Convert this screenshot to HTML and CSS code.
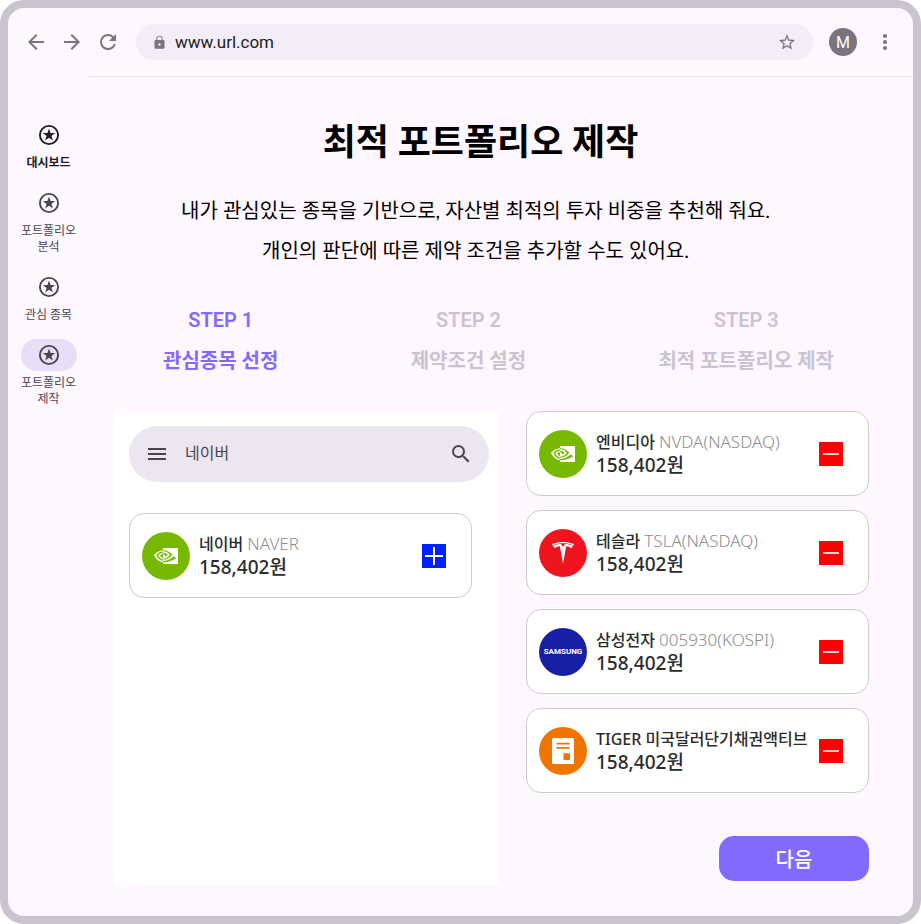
FILE: index.html
```html
<!DOCTYPE html>
<html lang="ko">
<head>
<meta charset="utf-8">
<meta name="viewport" content="width=device-width, initial-scale=1">
<title>최적 포트폴리오 제작</title>
<link rel="stylesheet" href="styles.css">
</head>
<body>
<svg class="defs" aria-hidden="true">
  <symbol id="star-circle" viewBox="0 0 24 24">
    <circle cx="12" cy="12" r="9.1" fill="none" stroke="currentColor" stroke-width="1.9"/>
    <path fill="currentColor" d="M12 5.6l1.55 4.5h4.6l-3.7 2.8 1.4 4.5L12 14.7l-3.85 2.7 1.4-4.5-3.7-2.8h4.6z"/>
  </symbol>
  <symbol id="nvidia" viewBox="0 0 24 24">
    <path fill="currentColor" d="M8.948 8.798v-1.43a6.7 6.7 0 0 1 .424-.018c3.922-.124 6.493 3.374 6.493 3.374s-2.774 3.851-5.75 3.851c-.398 0-.787-.062-1.158-.185v-4.346c1.528.185 1.837.857 2.747 2.385l2.04-1.714s-1.492-1.952-4-1.952a6.016 6.016 0 0 0-.796.035m0-4.735v2.138l.424-.027c5.45-.185 9.01 4.47 9.01 4.47s-4.08 4.964-8.33 4.964c-.37 0-.733-.035-1.095-.097v1.325c.3.035.61.062.91.062 3.957 0 6.82-2.023 9.593-4.408.459.371 2.34 1.263 2.73 1.652-2.633 2.208-8.772 3.984-12.253 3.984-.335 0-.653-.018-.971-.053v1.864H24V4.063zm0 10.326v1.131c-3.657-.654-4.673-4.46-4.673-4.46s1.758-1.944 4.673-2.262v1.237H8.94c-1.528-.186-2.73 1.245-2.73 1.245s.68 2.412 2.739 3.11M2.456 10.9s2.164-3.197 6.5-3.533V6.201C4.153 6.59 0 10.653 0 10.653s2.35 6.802 8.948 7.42v-1.237c-4.84-.6-6.492-5.936-6.492-5.936z"/>
  </symbol>
  <symbol id="minus" viewBox="0 0 24 24">
    <path fill="none" stroke="currentColor" stroke-width="2" d="M4 12h16"/>
  </symbol>
</svg>

<div class="window">
  <header class="toolbar">
    <div class="nav-buttons">
      <button class="icon-button" aria-label="뒤로"><svg viewBox="0 0 24 24"><path fill="currentColor" d="M20 11H7.83l5.59-5.59L12 4l-8 8 8 8 1.41-1.41L7.83 13H20z"/></svg></button>
      <button class="icon-button" aria-label="앞으로"><svg viewBox="0 0 24 24"><path fill="currentColor" d="M12 4l-1.41 1.41L16.17 11H4v2h12.17l-5.58 5.59L12 20l8-8z"/></svg></button>
      <button class="icon-button" aria-label="새로고침"><svg viewBox="0 0 24 24"><path fill="currentColor" d="M17.65 6.35A7.96 7.96 0 0 0 12 4a8 8 0 1 0 7.73 10h-2.08A6 6 0 1 1 12 6c1.66 0 3.14.69 4.22 1.78L13 11h7V4z"/></svg></button>
    </div>
    <div class="address">
      <svg class="lock" viewBox="0 0 24 24" aria-hidden="true"><path fill="currentColor" d="M18 8h-1V6A5 5 0 0 0 7 6v2H6a2 2 0 0 0-2 2v10c0 1.100.9 2 2 2h12a2 2 0 0 0 2-2V10a2 2 0 0 0-2-2zm-6 9a2 2 0 1 1 0-4 2 2 0 0 1 0 4zm3.500-9h-7V6a3.500 3.500 0 0 1 7 0z"/></svg>
      <input class="address-input" type="text" value="www.url.com" aria-label="주소">
      <button class="icon-button" aria-label="즐겨찾기"><svg viewBox="0 0 24 24"><path fill="currentColor" fill-rule="evenodd" d="M20 10.100l-5.750-.5L12 4.300 9.750 9.610 4 10.100l4.370 3.780L7.060 19.500 12 16.520l4.940 2.980-1.300-5.620zM12 15.030l-3.010 1.820.8-3.420-2.660-2.300 3.500-.3L12 7.600l1.380 3.240 3.500.3-2.660 2.300.8 3.420z"/></svg></button>
    </div>
    <button class="avatar" aria-label="프로필">M</button>
    <button class="icon-button" aria-label="메뉴"><svg viewBox="0 0 24 24"><g fill="currentColor"><circle cx="12" cy="6" r="2.100"/><circle cx="12" cy="12" r="2.100"/><circle cx="12" cy="18" r="2.100"/></g></svg></button>
  </header>

  <div class="page">
    <nav class="rail">
      <a class="rail-item rail-item-strong" href="#dashboard"><span class="pill"><svg><use href="#star-circle"/></svg></span><span>대시보드</span></a>
      <a class="rail-item" href="#analysis"><span class="pill"><svg><use href="#star-circle"/></svg></span><span>포트폴리오<br>분석</span></a>
      <a class="rail-item" href="#watchlist"><span class="pill"><svg><use href="#star-circle"/></svg></span><span>관심 종목</span></a>
      <a class="rail-item rail-item-current" href="#build" aria-current="page"><span class="pill"><svg><use href="#star-circle"/></svg></span><span>포트폴리오<br>제작</span></a>
    </nav>

    <main class="content">
      <div class="intro">
        <h1>최적 포트폴리오 제작</h1>
        <p>내가 관심있는 종목을 기반으로, 자산별 최적의 투자 비중을 추천해 줘요.<br>개인의 판단에 따른 제약 조건을 추가할 수도 있어요.</p>
      </div>

      <ol class="steps">
        <li class="step step-active" aria-current="step"><span class="step-number">STEP 1</span><span>관심종목 선정</span></li>
        <li class="step"><span class="step-number">STEP 2</span><span>제약조건 설정</span></li>
        <li class="step"><span class="step-number">STEP 3</span><span>최적 포트폴리오 제작</span></li>
      </ol>

      <div class="columns">
        <section class="panel" aria-label="종목 검색">
          <div class="search">
            <button class="icon-button" aria-label="메뉴 열기"><svg viewBox="0 0 24 24"><path fill="currentColor" d="M3 18h18v-2H3zm0-5h18v-2H3zm0-7v2h18V6z"/></svg></button>
            <input class="search-input" type="text" value="네이버" aria-label="종목 검색">
            <button class="icon-button" aria-label="검색"><svg viewBox="0 0 24 24"><path fill="currentColor" d="M15.500 14h-.79l-.28-.27A6.470 6.470 0 0 0 16 9.500 6.500 6.500 0 1 0 9.500 16c1.610 0 3.090-.59 4.230-1.570l.27.28v.79l5 4.990L20.490 19zm-6 0a4.500 4.500 0 1 1 0-9 4.500 4.500 0 0 1 0 9z"/></svg></button>
          </div>
          <article class="card">
            <span class="logo logo-nvidia"><svg><use href="#nvidia"/></svg></span>
            <div class="info">
              <div class="name">네이버 <span class="ticker">NAVER</span></div>
              <div class="price">158,402원</div>
            </div>
            <button class="square square-add" aria-label="네이버 추가"><svg viewBox="0 0 24 24"><path fill="none" stroke="currentColor" stroke-width="2" d="M3 12h18M12 3v18"/></svg></button>
          </article>
        </section>

        <section class="selected" aria-label="선택한 종목">
          <article class="card">
            <span class="logo logo-nvidia"><svg><use href="#nvidia"/></svg></span>
            <div class="info">
              <div class="name">엔비디아 <span class="ticker">NVDA(NASDAQ)</span></div>
              <div class="price">158,402원</div>
            </div>
            <button class="square square-remove" aria-label="엔비디아 삭제"><svg><use href="#minus"/></svg></button>
          </article>
          <article class="card">
            <span class="logo logo-tesla"><svg viewBox="-1 -1 26 26"><path fill="currentColor" d="M12 5.362l2.475-3.026s4.245.09 8.471 2.054c-1.082 1.636-3.231 2.438-3.231 2.438-.146-1.439-1.154-1.790-4.354-1.790L12 24 8.619 5.034c-3.180 0-4.188.354-4.335 1.792 0 0-2.146-.795-3.229-2.430C5.280 2.431 9.525 2.340 9.525 2.340L12 5.362zm0-3.899c3.415-.03 7.326.528 11.328 2.280.535-.968.672-1.395.672-1.395C19.625.612 15.528.015 12 0 8.472.015 4.375.61 0 2.349c0 0 .195.525.672 1.396C4.674 1.989 8.585 1.435 12 1.460z"/></svg></span>
            <div class="info">
              <div class="name">테슬라 <span class="ticker">TSLA(NASDAQ)</span></div>
              <div class="price">158,402원</div>
            </div>
            <button class="square square-remove" aria-label="테슬라 삭제"><svg><use href="#minus"/></svg></button>
          </article>
          <article class="card">
            <span class="logo logo-samsung">SAMSUNG</span>
            <div class="info">
              <div class="name">삼성전자 <span class="ticker">005930(KOSPI)</span></div>
              <div class="price">158,402원</div>
            </div>
            <button class="square square-remove" aria-label="삼성전자 삭제"><svg><use href="#minus"/></svg></button>
          </article>
          <article class="card">
            <span class="logo logo-fund"><svg viewBox="0 0 24 26"><rect x="1" width="22" height="26" rx="1" fill="#fff"/><path fill="#f07400" d="M5.500 4.700h13v1.800h-13zM5.500 9h13v1.800h-13zM12.500 15.300h6.500v6.700h-6.500z"/></svg></span>
            <div class="info">
              <div class="name">TIGER 미국달러단기채권액티브</div>
              <div class="price">158,402원</div>
            </div>
            <button class="square square-remove" aria-label="TIGER 미국달러단기채권액티브 삭제"><svg><use href="#minus"/></svg></button>
          </article>
          <button class="next">다음</button>
        </section>
      </div>
    </main>
  </div>
</div>
</body>
</html>
```

FILE: styles.css
```css
* {
  box-sizing: border-box;
}

body {
  margin: 0;
  background: #fff;
  color: #000;
  font-family: Lato, "Noto Sans CJK KR", sans-serif;
}

button,
input {
  margin: 0;
  padding: 0;
  border: 0;
  background: none;
  color: inherit;
  font: inherit;
}

svg {
  display: block;
}

.defs {
  position: absolute;
  width: 0;
  height: 0;
}

.window {
  min-height: 100vh;
  border: 8px solid #cac4d0;
  border-radius: 24px;
  background: #fef7ff;
}

/* Browser toolbar */
.toolbar {
  display: flex;
  align-items: center;
  gap: 16px;
  height: 68px;
  padding: 0 16px;
  color: #79747e;
  font-family: Roboto, sans-serif;
}

.nav-buttons {
  display: flex;
  gap: 12px;
}

.icon-button {
  flex: none;
  width: 24px;
  height: 24px;
}

.icon-button svg {
  width: 24px;
  height: 24px;
}

.address {
  display: flex;
  flex: 1;
  align-items: center;
  gap: 8px;
  height: 36px;
  padding: 0 14px 0 16px;
  border-radius: 18px;
  background: #f3edf7;
}

.lock {
  width: 15px;
  height: 15px;
}

.address-input {
  flex: 1;
  min-width: 0;
  color: #1d1b20;
  font-size: 17px;
}

.avatar {
  width: 28px;
  height: 28px;
  border-radius: 50%;
  background: #79747e;
  color: #fff;
  font-size: 16px;
}

/* Layout */
.page {
  display: flex;
}

.rail {
  display: flex;
  flex: none;
  flex-direction: column;
  gap: 16px;
  width: 81px;
  padding-top: 43px;
  font-family: Roboto, "Noto Sans CJK KR", sans-serif;
}

.rail-item {
  display: flex;
  flex-direction: column;
  align-items: center;
  gap: 4px;
  color: #49454f;
  font-size: 12px;
  line-height: 16px;
  text-align: center;
  text-decoration: none;
}

.rail-item-strong {
  color: #1d1b20;
  font-weight: 700;
}

.pill {
  display: grid;
  place-items: center;
  width: 56px;
  height: 32px;
  border-radius: 16px;
}

.pill svg {
  width: 24px;
  height: 24px;
}

.rail-item-current .pill {
  background: #e8def8;
}

.content {
  flex: 1;
  min-width: 0;
  padding: 42px 44px 31px 25px;
  border-top: 1px solid #e6e0e9;
}

.intro {
  padding-right: 22px;
  text-align: center;
}

h1 {
  margin: 0;
  font-size: 36px;
  font-weight: 700;
  line-height: 44px;
}

.intro p {
  margin: 27px 0 0;
  padding-right: 10px;
  font-size: 20px;
  line-height: 40px;
}

.steps {
  display: flex;
  justify-content: space-between;
  margin: 30px 0 31px;
  padding: 0 35px 0 49px;
  list-style: none;
}

.step {
  display: flex;
  flex-direction: column;
  color: #cac4d0;
  font-size: 20px;
  font-weight: 600;
  line-height: 40px;
  text-align: center;
}

.step-number {
  font-family: Roboto, sans-serif;
}

.step-active {
  color: #826aff;
}

.columns {
  display: grid;
  grid-template-columns: 385fr 343fr;
  gap: 27px;
}

.panel {
  min-height: 474px;
  padding: 15px 10px 15px 15px;
  background: #fff;
}

.panel .card {
  margin: 31px 17px 0 0;
}

/* Search box */
.search {
  display: flex;
  align-items: center;
  gap: 16px;
  height: 56px;
  padding: 0 16px;
  border-radius: 28px;
  background: #ece6f0;
  color: #49454f;
}

.search-input {
  flex: 1;
  min-width: 0;
  padding-bottom: 4px;
  font-size: 16px;
}

/* Stock cards */
.selected {
  display: flex;
  flex-direction: column;
  gap: 14px;
}

.card {
  display: flex;
  align-items: center;
  gap: 9px;
  height: 85px;
  padding: 0 25px 0 12px;
  border: 1px solid #cccccc;
  border-radius: 15px;
  background: #fff;
  color: #2b2b2b;
  font-family: "Noto Sans", "Noto Sans CJK KR", sans-serif;
}

.logo {
  display: grid;
  flex: none;
  place-items: center;
  width: 48px;
  height: 48px;
  border-radius: 50%;
  color: #fff;
}

.logo svg {
  width: 24px;
  height: 24px;
}

.logo-nvidia {
  background: #76b900;
}

.logo-tesla {
  background: #f0141e;
}

.logo-samsung {
  background: #1720a5;
  font-family: Roboto, sans-serif;
  font-size: 8px;
  font-weight: 700;
}

.logo-fund {
  background: #f07400;
}

.logo-fund svg {
  height: 26px;
}

.info {
  flex: 1;
  min-width: 0;
  white-space: nowrap;
}

.name {
  font-size: 16px;
  font-weight: 500;
  line-height: 22px;
}

.ticker {
  color: #8c8c8c;
  font-size: 17px;
  font-weight: 300;
}

.price {
  font-size: 19px;
  font-weight: 500;
  line-height: 24px;
}

.square {
  flex: none;
  width: 24px;
  height: 24px;
}

.square svg {
  width: 24px;
  height: 24px;
}

.square-add {
  background: #0022ff;
  color: #fff;
}

.square-remove {
  background: #ff0000;
  color: #ffd0d0;
}

.next {
  align-self: flex-end;
  width: 150px;
  height: 45px;
  margin: auto 0 4px;
  border-radius: 15px;
  background: #826aff;
  color: #fff;
  font-size: 20px;
  font-weight: 500;
}
```
